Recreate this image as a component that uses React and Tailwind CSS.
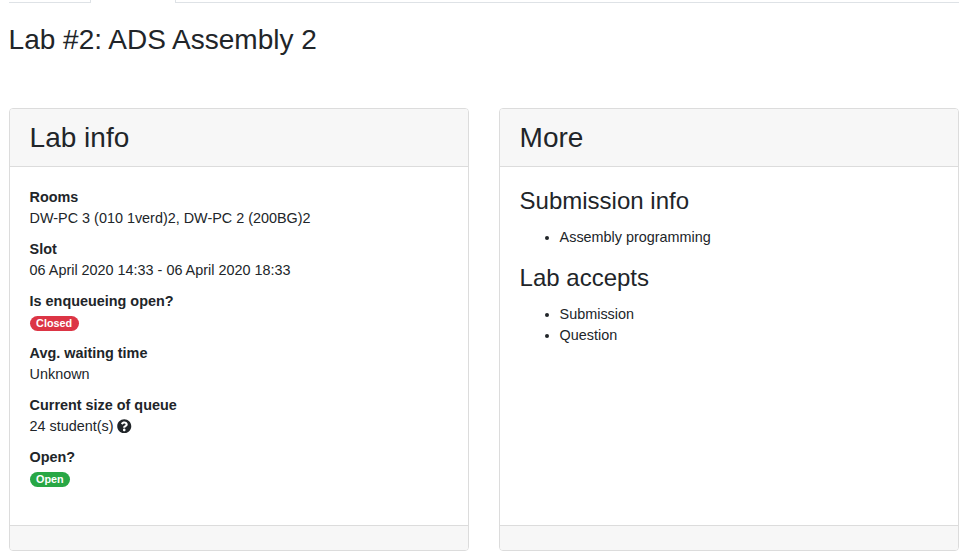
import { FaQuestionCircle } from 'react-icons/fa';

function Badge({ color, children }) {
    return (
        <span className={`${color} inline-block mt-[4px] rounded-full px-[6.5px] text-[10.8px] leading-[15px] font-bold text-white align-top`}>
            {children}
        </span>
    );
}

function Field({ label, children }) {
    return (
        <div className="mb-[10px]">
            <div className="font-bold leading-[21px]">{label}</div>
            <div className="leading-[21px] h-[21px]">{children}</div>
        </div>
    );
}

function Card({ title, bodyClass, children }) {
    return (
        <div className="flex flex-col h-[443px] rounded-[4px] border border-[#dcdcdc]">
            <div className="h-[58px] shrink-0 rounded-t-[3px] bg-[#f7f7f7] border-b border-[#dcdcdc] px-[19.6px] text-[28px] leading-[58px]">{title}</div>
            <div className={`flex-1 px-[19.6px] ${bodyClass}`}>{children}</div>
            <div className="h-[25px] shrink-0 rounded-b-[3px] bg-[#f7f7f7] border-t border-[#dcdcdc]"></div>
        </div>
    );
}

function List({ items }) {
    return (
        <ul className="list-disc pl-10">
            {items.map((item) => (
                <li key={item} className="leading-[21.6px]">{item}</li>
            ))}
        </ul>
    );
}

export default function App() {
    return (
        <div className="w-[976px] h-[560px] overflow-hidden bg-white text-[#212529] text-[14.4px] font-['Liberation_Sans',sans-serif]">
            <div className="pl-[9px] pr-[17px]">
                {/* Tabs, scrolled mostly out of view */}
                <div className="flex h-[3px] border-b border-[#dee2e6]">
                    <div className="w-[82px] border-r border-[#dee2e6]"></div>
                    <div className="w-[85px] h-[3px] bg-white border-r border-[#dee2e6]"></div>
                </div>

                <h1 className="mt-[19px] -ml-[0.4px] text-[28px] leading-[36px]">Lab #2: ADS Assembly 2</h1>

                <div className="mt-[50px] grid grid-cols-2 gap-[30px]">
                    <Card title="Lab info" bodyClass="pt-[20px]">
                        <Field label="Rooms">DW-PC 3 (010 1verd)2, DW-PC 2 (200BG)2</Field>
                        <Field label="Slot">06 April 2020 14:33 - 06 April 2020 18:33</Field>
                        <Field label="Is enqueueing open?">
                            <Badge color="bg-[#dc3545]">Closed</Badge>
                        </Field>
                        <Field label="Avg. waiting time">Unknown</Field>
                        <Field label="Current size of queue">
                            <span className="inline-flex items-center gap-[3.6px]">
                                24 student(s) <FaQuestionCircle className="w-[14.5px] h-[14.5px] -mt-[1px]" />
                            </span>
                        </Field>
                        <Field label="Open?">
                            <Badge color="bg-[#28a745]">Open</Badge>
                        </Field>
                    </Card>

                    <Card title="More" bodyClass="pt-[19px]">
                        <h4 className="text-[24px] leading-[29px] mb-[12px]">Submission info</h4>
                        <List items={['Assembly programming']} />
                        <h4 className="text-[24px] leading-[29px] mt-[14px] mb-[12px]">Lab accepts</h4>
                        <List items={['Submission', 'Question']} />
                    </Card>
                </div>
            </div>
        </div>
    );
}
